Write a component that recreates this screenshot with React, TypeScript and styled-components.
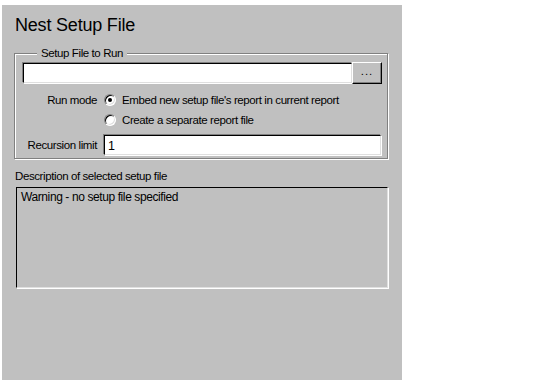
import React from "react";
import styled, { createGlobalStyle } from "styled-components";

const Global = createGlobalStyle`
  html, body { margin: 0; padding: 0; background: #ffffff; }
  body { font-family: "Liberation Sans", Arial, sans-serif; font-size: 11.5px; letter-spacing: -0.4px; color: #000; }
`;

const Panel = styled.div`
  margin: 5px 0 0 2px;
  width: 400px;
  height: 375px;
  background: #c0c0c0;
  box-sizing: border-box;
  padding: 8px 14px 0 12px;
  display: flex;
  flex-direction: column;
`;

const Title = styled.h1`
  margin: 0 0 0 1px;
  font-size: 18px;
  font-weight: normal;
  letter-spacing: -0.2px;
  line-height: 24px;
  height: 24px;
`;

const Group = styled.fieldset`
  margin: 10px 0 0 0;
  padding: 2px 5px 3px 8px;
  border: 1px solid #808080;
  box-shadow: inset 1px 1px 0 #ffffff, 1px 1px 0 #ffffff;
  display: grid;
  grid-template-columns: 74px 1fr;
  column-gap: 7px;
  align-items: center;
  min-width: 0;
`;

const Legend = styled.legend`
  margin-left: 14px;
  padding: 0 4px;
  line-height: 13px;
  background: #c0c0c0;
`;

const FileRow = styled.div`
  grid-column: 1 / 3;
  display: flex;
  align-items: center;
  margin-bottom: 5px;
`;

const Field = styled.input`
  flex: 1;
  min-width: 0;
  height: 20px;
  box-sizing: border-box;
  margin: 0;
  padding: 1px 3px 0;
  font: inherit;
  font-size: 12.5px;
  background: #ffffff;
  border: none;
  border-top: 1px solid #000;
  border-left: 1px solid #000;
  border-right: 1px solid #dfdfdf;
  border-bottom: 1px solid #dfdfdf;
  box-shadow: -1px -1px 0 #808080, 1px 1px 0 #ffffff;
  outline: none;
`;

const Browse = styled.button`
  width: 30px;
  height: 22px;
  margin: 0;
  padding: 0 0 4px 0;
  font: inherit;
  background: #c0c0c0;
  border: none;
  border-top: 1px solid #ffffff;
  border-left: 1px solid #ffffff;
  border-right: 1px solid #000;
  border-bottom: 1px solid #000;
  box-shadow: inset -1px -1px 0 #808080;
  letter-spacing: 1px;
`;

const Label = styled.span<{ $top?: boolean }>`
  text-align: right;
  white-space: nowrap;
  align-self: ${(p) => (p.$top ? "start" : "center")};
  padding-top: ${(p) => (p.$top ? "4px" : "0")};
  line-height: 14px;
`;

const Options = styled.div`
  display: flex;
  flex-direction: column;
  gap: 6px;
  padding: 4px 0 8px;
`;

const Option = styled.label`
  display: flex;
  align-items: center;
  gap: 6px;
  height: 14px;
  white-space: nowrap;
`;

const Radio = styled.span<{ $checked?: boolean }>`
  width: 12px;
  height: 12px;
  flex: none;
  box-sizing: border-box;
  border-radius: 50%;
  border-top: 1px solid #808080;
  border-left: 1px solid #808080;
  border-right: 1px solid #ffffff;
  border-bottom: 1px solid #ffffff;
  box-shadow: inset 1px 1px 0 #000, inset -1px -1px 0 #dfdfdf;
  background: #ffffff;
  display: flex;
  align-items: center;
  justify-content: center;
  &::after {
    content: "";
    width: 4px;
    height: 4px;
    border-radius: 50%;
    background: ${(p) => (p.$checked ? "#000" : "transparent")};
  }
`;

const LimitField = styled(Field)`
  margin-right: 1px;
`;

const Caption = styled.div`
  margin: 10px 0 0 1px;
  line-height: 14px;
`;

const DescBox = styled.div`
  margin: 4px 0 0 2px;
  height: 101px;
  box-sizing: border-box;
  padding: 1px 4px;
  border-top: 1px solid #000;
  border-left: 1px solid #000;
  border-right: 1px solid #dfdfdf;
  border-bottom: 1px solid #dfdfdf;
  box-shadow: 1px 1px 0 #ffffff;
  line-height: 16px;
  font-size: 12px;
`;

export default function App() {
  return (
    <>
      <Global />
      <Panel>
        <Title>Nest Setup File</Title>
        <Group>
          <Legend>Setup File to Run</Legend>
          <FileRow>
            <Field defaultValue="" />
            <Browse>...</Browse>
          </FileRow>
          <Label $top>Run mode</Label>
          <Options>
            <Option>
              <Radio $checked />
              Embed new setup file's report in current report
            </Option>
            <Option>
              <Radio />
              Create a separate report file
            </Option>
          </Options>
          <Label>Recursion limit</Label>
          <LimitField defaultValue="1" />
        </Group>
        <Caption>Description of selected setup file</Caption>
        <DescBox>Warning - no setup file specified</DescBox>
      </Panel>
    </>
  );
}
